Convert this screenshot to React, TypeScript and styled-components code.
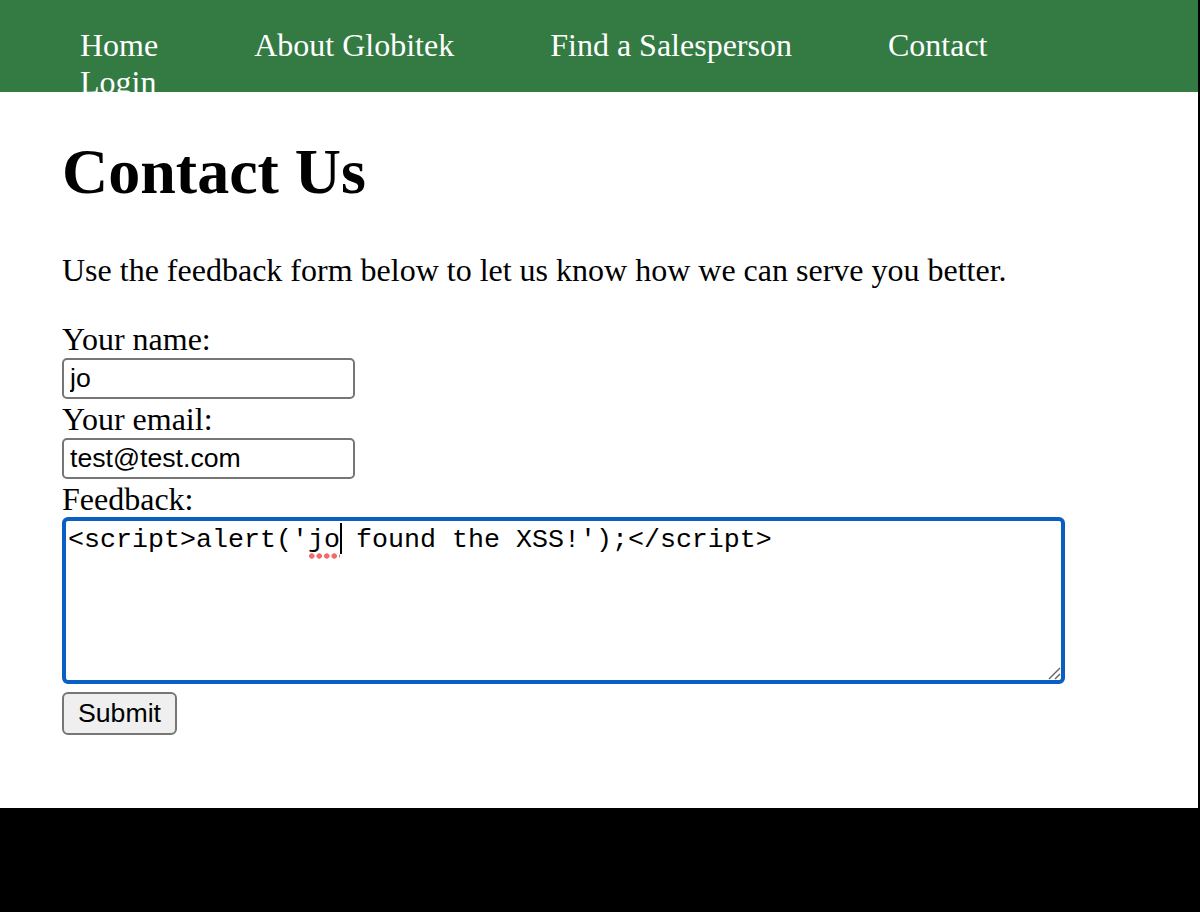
import React from "react";
import styled, { createGlobalStyle } from "styled-components";

const GlobalStyle = createGlobalStyle`
  html, body {
    margin: 0;
    padding: 0;
    background: #000;
  }
  * { box-sizing: border-box; }
`;

const Page = styled.div`
  width: 1198px;
  height: 808px;
  background: #fff;
  overflow: hidden;
  font-family: "Liberation Serif", "Times New Roman", serif;
  font-size: 32px;
  color: #000;
`;

const NavBar = styled.nav`
  height: 92px;
  background: #347b43;
  overflow: hidden;
  padding: 27px 0 0 80px;
`;

const NavList = styled.ul`
  list-style: none;
  margin: 0;
  padding: 0;
  width: 1000px;
  display: flex;
  flex-wrap: wrap;
  column-gap: 96px;
  row-gap: 0;
`;

const NavItem = styled.li`
  line-height: normal;
`;

const NavLink = styled.a`
  color: #fff;
  text-decoration: none;
`;

const Main = styled.main`
  padding: 0 62px;
`;

const Title = styled.h1`
  font-size: 64px;
  font-weight: bold;
  margin: 43px 0;
  line-height: normal;
`;

const Intro = styled.p`
  margin: 0 0 30px;
  line-height: normal;
`;

const Form = styled.form`
  display: flex;
  flex-direction: column;
  align-items: flex-start;
`;

const Label = styled.label`
  display: block;
  height: 37px;
  line-height: 41px;
`;

const TextInput = styled.input`
  width: 293px;
  height: 41px;
  margin: 2px 0 0;
  padding: 0 6px;
  border: 2px solid #767676;
  border-radius: 5px;
  background: #fff;
  color: #000;
  font-family: "Liberation Sans", Arial, sans-serif;
  font-size: 26.67px;
  outline: none;
`;

const FeedbackBox = styled.div`
  position: relative;
  width: 1003px;
  height: 167px;
  margin-top: 1px;
  border: 4px solid #0a5fc4;
  border-radius: 6px;
  padding: 2px 2px;
  font-family: "Liberation Mono", "Courier New", monospace;
  font-size: 26.67px;
  line-height: normal;
  white-space: pre;
  background: #fff;
`;

const Misspelled = styled.span`
  position: relative;
  &::after {
    content: "";
    position: absolute;
    left: 0;
    right: 0;
    bottom: -4px;
    height: 6px;
    background-image: radial-gradient(circle, #f06a6a 2.4px, transparent 3px);
    background-size: 7.5px 6px;
    background-repeat: repeat-x;
  }
`;

const Caret = styled.span`
  display: inline-block;
  width: 2px;
  height: 31px;
  background: #000;
  vertical-align: -7px;
  margin-right: -2px;
`;

const ResizeHandle = styled.svg`
  position: absolute;
  right: 0;
  bottom: 0;
  width: 15px;
  height: 15px;
`;

const SubmitButton = styled.button`
  margin-top: 8px;
  width: 115px;
  height: 43px;
  padding: 0;
  border: 2px solid #767676;
  border-radius: 6px;
  background: #efefef;
  color: #000;
  font-family: "Liberation Sans", Arial, sans-serif;
  font-size: 26.67px;
`;

const navItems = ["Home", "About Globitek", "Find a Salesperson", "Contact", "Login"];

export default function App() {
  return (
    <>
      <GlobalStyle />
      <Page>
        <NavBar>
          <NavList>
            {navItems.map((item) => (
              <NavItem key={item}>
                <NavLink href="#">{item}</NavLink>
              </NavItem>
            ))}
          </NavList>
        </NavBar>
        <Main>
          <Title>Contact Us</Title>
          <Intro>Use the feedback form below to let us know how we can serve you better.</Intro>
          <Form onSubmit={(e) => e.preventDefault()}>
            <Label htmlFor="name">Your name:</Label>
            <TextInput id="name" type="text" defaultValue="jo" />
            <Label htmlFor="email">Your email:</Label>
            <TextInput id="email" type="text" defaultValue="test@test.com" />
            <Label>Feedback:</Label>
            <FeedbackBox>
              {"<script>alert('"}
              <Misspelled>jo</Misspelled>
              <Caret />
              {" found the XSS!');</script>"}
              <ResizeHandle viewBox="0 0 15 15">
                <line x1="3" y1="14" x2="14" y2="3" stroke="#666" strokeWidth="1.5" />
                <line x1="9" y1="14" x2="14" y2="9" stroke="#666" strokeWidth="1.5" />
              </ResizeHandle>
            </FeedbackBox>
            <SubmitButton type="submit">Submit</SubmitButton>
          </Form>
        </Main>
      </Page>
    </>
  );
}
